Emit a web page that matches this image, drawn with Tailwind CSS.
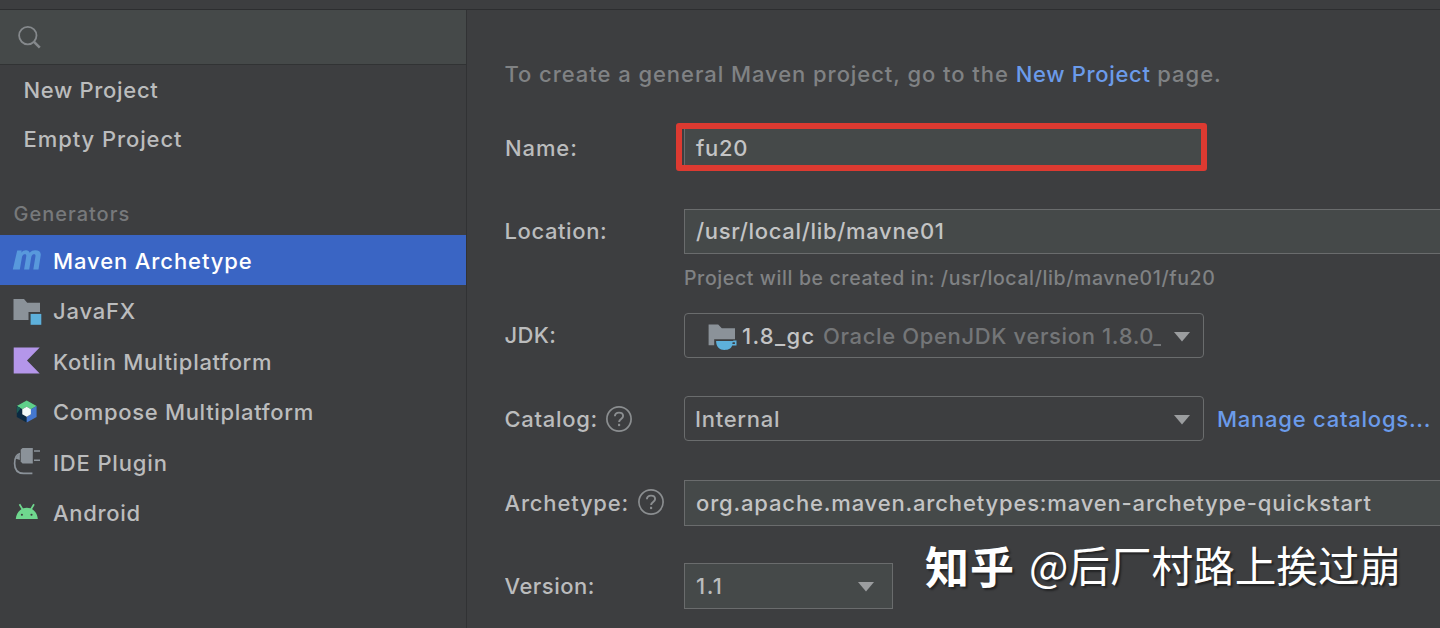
<!DOCTYPE html>
<html lang="en">
<head>
<meta charset="utf-8">
<title>New Project</title>
<script src="https://cdn.jsdelivr.net/npm/@tailwindcss/browser@4"></script>
</head>
<body class="relative flex h-[628px] w-[1440px] flex-col overflow-hidden bg-[#3d3e40] font-['Inter','Noto_Sans_CJK_SC',sans-serif] text-[22px] leading-none font-[450] whitespace-nowrap text-[#bbbcbd]">
<header class="h-[10px] shrink-0 border-b border-[#2d2e30]"></header>
<div class="flex min-h-0 flex-1">

  <!-- Sidebar -->
  <aside class="flex w-[467px] shrink-0 flex-col border-r border-[#313234]">
    <div class="flex h-[55px] shrink-0 items-center border-b border-[#313334] bg-[#454949] pt-px pl-[18px]">
      <svg class="size-6" viewBox="0 0 24 24" fill="none" stroke="#85898c"><circle cx="9.8" cy="9.6" r="8.7" stroke-width="1.8"/><path d="M15.8 15.6L21.8 21.6" stroke-width="2.6"/></svg>
    </div>
    <div class="flex h-[50px] items-center pl-[23.5px] tracking-[0.68px]">New Project</div>
    <div class="flex h-[48px] items-center pl-[23.5px] tracking-[0.92px]">Empty Project</div>
    <div class="mt-[31px] flex h-[40px] items-center pl-[13.500px] text-[20px] tracking-[1px] text-[#77797b]">Generators</div>
    <ul class="mt-px">
      <li class="flex h-[50.4px] items-center gap-[11px] bg-[#3a65c4] pt-px pl-[12px] text-white">
        <svg class="h-[30px] w-[30px]" viewBox="0 0 30 30"><path d="M5.2 4.500h4.500l-.4 2.200c1.600-1.700 3.100-2.500 4.800-2.400 2 0 3.200.9 3.500 2.500 1.600-1.700 3.300-2.500 5.500-2.500 4 0 6.200 1.900 5.600 5.200L26.500 23.500h-5.200l2.100-12.800c.3-1.700-.2-2.400-1.300-2.400-1.700 0-2.600 1.300-2.900 3.200L17.200 23.500H12.100l2.100-12.800c.3-1.700-.2-2.400-1.300-2.400-1.700 0-2.700 1.300-3 3.200L7.800 23.500H.8z" fill="#5899dc"/></svg>
        <span class="tracking-[0.9px]">Maven Archetype</span>
      </li>
      <li class="flex h-[50.4px] items-center gap-[11px] pt-px pl-[12px]">
        <svg class="h-[30px] w-[30px]" viewBox="0 0 30 30"><path d="M1.500 3h10.500l3.200 3.700h12.800V16H16.500v8H1.500z" fill="#8b9299"/><path d="M18.600 17.900h10.700v10.900H18.600z" fill="#5db0db"/></svg>
        <span class="tracking-[0.8px]">JavaFX</span>
      </li>
      <li class="flex h-[50.4px] items-center gap-[11px] pt-[2px] pl-[12px]">
        <svg class="h-[30px] w-[30px]" viewBox="0 0 30 30"><path d="M1.700 .5h26L15 13.500l12.700 13h-26z" fill="#b496ea"/></svg>
        <span class="tracking-[0.7px]">Kotlin Multiplatform</span>
      </li>
      <li class="flex h-[50.4px] items-center gap-[11px] pt-[2px] pl-[12px]">
        <svg class="h-[30px] w-[30px]" viewBox="0 0 30 30"><path d="M14.700 3.500l9.900 5.400-5.700 3.300-4.200-2.400-4.400 2.400-5.500-3.300z" fill="#5fd08a"/><path d="M4.800 8.900l5.500 3.300v5l4.400 2.500v5.800l-9.900-5.600z" fill="#0a2a42"/><path d="M4.800 8.900l4 2.300-4 5.300z" fill="#1d5c56"/><path d="M24.600 8.900v11l-9.900 5.600v-5.800l4.200-2.500v-5z" fill="#4478d0"/><path d="M14.700 9.800l4.200 2.400v5l-4.200 2.500-4.400-2.500v-5z" fill="#f1faf9"/></svg>
        <span class="tracking-[0.68px]">Compose Multiplatform</span>
      </li>
      <li class="flex h-[50.4px] items-center gap-[11px] pt-[2px] pl-[12px]">
        <svg class="h-[30px] w-[30px]" viewBox="0 0 30 30"><path d="M10.500 0h10.300v15.400H10.500l-1.800-1.800V1.800z" fill="#8b9299"/><path d="M22 3h6M22 12.200h6" stroke="#8b9299" stroke-width="1.500"/><path d="M8 5.500C4 6.500 2.600 10.500 2.600 15.500c0 7 3 9.900 9 9.900h8.800" fill="none" stroke="#8b9299" stroke-width="1.700"/><path d="M7.800 4.800v7.200L3.500 10.500z" fill="#8b9299"/></svg>
        <span class="tracking-[0.85px]">IDE Plugin</span>
      </li>
      <li class="flex h-[50.4px] items-center gap-[11px] pt-[2px] pl-[12px]">
        <svg class="h-[30px] w-[30px]" viewBox="0 0 30 30"><path d="M7.500 6.200l3 5M22 6.200l-3 5" stroke="#6fd78e" stroke-width="1.700"/><path d="M3.800 21C4.300 14.500 8.700 9.800 14.800 9.800S25.300 14.500 25.800 21z" fill="#6fd78e"/><circle cx="9.900" cy="16.700" r="1.050" fill="#3d3e40"/><circle cx="19.500" cy="16.700" r="1.050" fill="#3d3e40"/></svg>
        <span class="tracking-[0.7px]">Android</span>
      </li>
    </ul>
  </aside>

  <!-- Project form -->
  <main class="flex min-w-0 flex-1 flex-col pl-[37px]">
    <p class="mt-[44px] flex h-[40px] shrink-0 items-center pl-[0.500px] whitespace-pre tracking-[0.940px] text-[#808284]">To create a general Maven project, go to the <a class="tracking-[0.680px] text-[#6b9bea]">New Project</a> page.</p>

    <div class="mt-[31px] flex h-[46px] shrink-0 items-center">
      <label class="w-[180px] pl-px tracking-[0.900px]">Name:</label>
      <div class="relative flex h-full w-[520px] items-center border border-[#6a6c6d] bg-[#454949] pl-[11px] tracking-[0.700px] text-[#c3c4c5]">fu20
        <span class="absolute -top-[3px] -left-[9px] h-[48px] w-[531px] rounded-[3px] border-[6px] border-[#dd3a31]"></span>
      </div>
    </div>

    <div class="mt-[38px] flex h-[45px] shrink-0 items-center">
      <label class="w-[180px] pb-px pl-[0.500px] tracking-[0.600px]">Location:</label>
      <div class="flex h-full flex-1 items-center border border-r-0 border-[#6a6c6d] bg-[#454949] pb-px pl-[11px] tracking-[0.680px] text-[#c3c4c5]">/usr/local/lib/mavne01</div>
    </div>
    <p class="mt-[10px] flex h-[30px] shrink-0 items-center pl-[180px] text-[19.500px] tracking-[0.610px] text-[#808284]">Project will be created in: /usr/local/lib/mavne01/fu20</p>

    <div class="mt-[19px] flex h-[45px] shrink-0 items-center">
      <label class="w-[180px] pb-px pl-[0.500px] tracking-[0.400px]">JDK:</label>
      <div class="flex h-full w-[520px] items-center rounded-[4px] border border-[#6a6c6d] pl-[23px]">
        <svg class="h-[30px] w-[30px]" viewBox="0 0 30 30"><path d="M.6 3.400h9.600l3.600 3.900h13.200v11H6.200v5.900H.6z" fill="#8b9299"/><path d="M8.100 20h17.200v-.5h3.200v5.100h-4.300c-1.200 3-3.200 4.400-7.800 4.400s-8.300-3-8.300-9z" fill="#5db0db"/><path d="M24.600 21.300h2.300v1.600h-2.500z" fill="#3d3e40"/></svg>
        <span class="ml-[4px] w-[81px] tracking-[1.300px] text-[#c3c4c5]">1.8_gc</span>
        <span class="w-[338px] overflow-hidden py-1 tracking-[0.640px] text-[#747678]">Oracle OpenJDK version 1.8.0_</span>
        <svg class="mt-[2px] ml-[13px] h-[10px] w-4 shrink-0" viewBox="0 0 16 10"><path d="M0 0h16L8 9.500z" fill="#9b9d9f"/></svg>
      </div>
    </div>

    <div class="mt-[38px] flex h-[45px] shrink-0 items-center">
      <div class="flex w-[180px] items-center gap-[10px] pl-[0.500px]">
        <label class="pt-px tracking-[0.680px]">Catalog:</label>
        <svg class="-ml-[2px] size-[26px]" viewBox="0 0 26 26" fill="none" stroke="#8b8e90"><circle cx="13" cy="13" r="12.100" stroke-width="1.700"/><path d="M8.900 10.300c.1-2.300 1.700-3.700 4.100-3.700s4.100 1.400 4.100 3.400c0 3-4 2.900-4 6" stroke-width="1.900"/><path d="M13.100 17.800v2.300" stroke-width="2.100"/></svg>
      </div>
      <div class="flex h-full w-[520px] items-center justify-between rounded-[4px] border border-[#6a6c6d] pt-px pr-[13px] pl-[10px]">
        <span class="tracking-[0.720px]">Internal</span>
        <svg class="mt-px h-[10px] w-4" viewBox="0 0 16 10"><path d="M0 0h16L8 9.500z" fill="#9b9d9f"/></svg>
      </div>
      <a class="ml-[13px] pt-px tracking-[0.760px] text-[#6b9bea]">Manage catalogs...</a>
    </div>

    <div class="mt-[39px] flex h-[46px] shrink-0 items-center">
      <div class="flex w-[180px] items-center gap-[10px] pl-[0.500px]">
        <label class="tracking-[0.820px]">Archetype:</label>
        <svg class="-mt-[2px] -ml-[1.500px] size-[26px]" viewBox="0 0 26 26" fill="none" stroke="#8b8e90"><circle cx="13" cy="13" r="12.100" stroke-width="1.700"/><path d="M8.900 10.300c.1-2.300 1.700-3.700 4.100-3.700s4.100 1.400 4.100 3.400c0 3-4 2.900-4 6" stroke-width="1.900"/><path d="M13.100 17.800v2.300" stroke-width="2.100"/></svg>
      </div>
      <div class="flex h-full flex-1 items-center border border-r-0 border-[#6a6c6d] bg-[#454949] pl-[11px] tracking-[0.840px] text-[#c3c4c5]">org.apache.maven.archetypes:maven-archetype-quickstart</div>
    </div>

    <div class="mt-[37px] flex h-[46px] shrink-0 items-center">
      <label class="w-[180px] pl-[0.500px] tracking-[0.500px]">Version:</label>
      <div class="flex h-full w-[209px] items-center justify-between border border-[#6a6c6d] bg-[#454949] pr-[18px] pl-[11px]">
        <span class="tracking-[1.500px]">1.1</span>
        <svg class="mt-[2px] h-[10px] w-4" viewBox="0 0 16 10"><path d="M0 0h16L8 9.500z" fill="#9b9d9f"/></svg>
      </div>
    </div>
  </main>
</div>

<!-- Watermark -->
<div class="absolute top-[535px] left-[925px] flex h-[60px] items-center font-['Noto_Sans_CJK_SC',sans-serif] font-normal text-white [text-shadow:2px_2px_2px_rgba(0,0,0,0.45)]">
  <span class="w-[104px] text-[44px] font-bold tracking-[1px]">知乎</span>
  <span class="text-[41.600px]">@后厂村路上挨过崩</span>
</div>
</body>
</html>
